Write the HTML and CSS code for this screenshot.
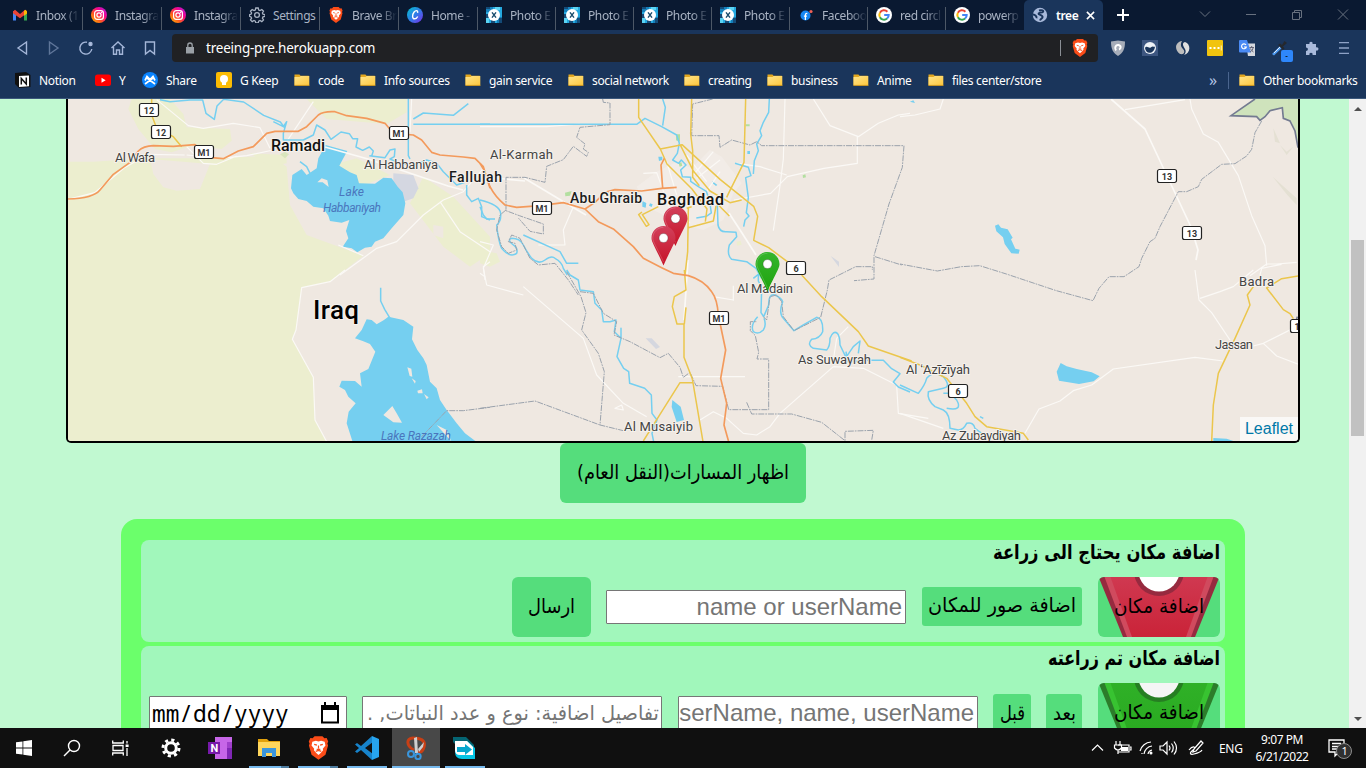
FILE: index.html
```html
<!DOCTYPE html>
<html lang="ar">
<head>
<meta charset="utf-8">
<title>treeing</title>
<link rel="stylesheet" href="styles.css">
</head>
<body>
<svg class="defs" width="0" height="0">
  <defs>
    <linearGradient id="gold" x1="0" y1="0" x2="1" y2="1"><stop offset="0" stop-color="#ffe48a"/><stop offset="1" stop-color="#fdc73e"/></linearGradient>
    <linearGradient id="insta" x1="0" y1="1" x2="1" y2="0"><stop offset="0" stop-color="#ffc400"/><stop offset=".35" stop-color="#ff5a1f"/><stop offset=".65" stop-color="#f4068c"/><stop offset="1" stop-color="#a31cf0"/></linearGradient>
    <linearGradient id="canva" x1="0" y1="0" x2="1" y2="1"><stop offset="0" stop-color="#00c4cc"/><stop offset=".5" stop-color="#2f7de8"/><stop offset="1" stop-color="#7d2ae8"/></linearGradient>
    <linearGradient id="redpin" x1="0" y1="0" x2="0" y2="1"><stop offset="0" stop-color="#d2405b"/><stop offset="1" stop-color="#c61226"/></linearGradient>
    <linearGradient id="greenpin" x1="0" y1="0" x2="0" y2="1"><stop offset="0" stop-color="#36b52d"/><stop offset="1" stop-color="#1ea30d"/></linearGradient>
    <linearGradient id="redface" x1="0" y1="0" x2="0" y2="1"><stop offset="0" stop-color="#d03a52"/><stop offset="1" stop-color="#ca2338"/></linearGradient>
    <linearGradient id="greenface" x1="0" y1="0" x2="0" y2="1"><stop offset="0" stop-color="#30b128"/><stop offset="1" stop-color="#28a91f"/></linearGradient>
    <symbol id="folder" viewBox="0 0 16 16"><path d="M.5 2.500h5l1 1.300h8.300v9.700H.5z" fill="#e3a71e"/><path d="M.5 5h5l1.200-1h8.600v9.200H.5z" fill="url(#gold)"/><path d="M.5 13.400h15" stroke="#d99d1c" stroke-width=".8"/></symbol>
    <symbol id="ig" viewBox="0 0 16 16"><circle cx="8" cy="8" r="8" fill="url(#insta)"/><g fill="none" stroke="#fff" stroke-width="1.200"><rect x="3.600" y="3.600" width="8.800" height="8.800" rx="2.600"/><circle cx="8" cy="8" r="2.100"/></g><circle cx="10.600" cy="5.400" r=".6" fill="#fff"/></symbol>
    <symbol id="brave" viewBox="0 0 16 18"><path d="M5 0h6l1.500 1.600 1.700-.2L15.400 4l-.6 1.600.5 1.500-2 7L8 18l-5.300-3.900-2-7 .5-1.500L.6 4l1.200-2.600 1.700.2z" fill="#fb4c18"/><path d="M3.300 4.300 6 3.500l2 .5 2-.5 2.700.8.6 2.700-2 2.600.2 1.200-1.800 2L8 14.300l-1.700-1.500-1.800-2 .2-1.200-2-2.600z" fill="#fff"/><path d="M4.700 6.200l2.100.6M11.300 6.200l-2.100.6M8 7v2.300M6.600 10h2.800M5.900 11.600l2.100-.8 2.100.8" stroke="#fb4c18" stroke-width=".9" fill="none"/></symbol>
    <symbol id="google" viewBox="0 0 16 16"><circle cx="8" cy="8" r="8" fill="#fff"/><g fill="none" stroke-width="2"><path d="M11.400 4.700A4.700 4.700 0 0 0 3.900 5.800" stroke="#ea4335"/><path d="M3.900 5.800a4.700 4.700 0 0 0 0 4.400" stroke="#fbbc05"/><path d="M3.900 10.200a4.700 4.700 0 0 0 7.200 1.400" stroke="#34a853"/><path d="M11.100 11.600A4.700 4.700 0 0 0 12.700 8H8.200" stroke="#4285f4"/></g></symbol>
    <symbol id="pixlr" viewBox="0 0 16 16"><path fill="#25a9e0" d="M0 0h16v16H0z"/><path d="M0 0h7v5H0zM11 10h5v6h-5z" fill="#1580bb"/><path d="M0 0h4v2H0zM13 11h3v5h-3zM0 7h3v4H0zM5 13h4v3H5z" fill="#144b78"/><path d="M9 0h5v3H9zM0 11h3v5H0z" fill="#5bd4f4"/><circle cx="8" cy="8" r="6" fill="#fff"/><path d="M6 5.300 10 10.700M10 5.300 6 10.700" stroke="#174a6b" stroke-width="1.400"/></symbol>
    <symbol id="gear" viewBox="0 0 16 16"><g fill="none" stroke="currentColor"><circle cx="8" cy="8" r="2.400" stroke-width="1.300"/><path stroke-width="1.300" d="M6.800 1h2.400l.5 2 1.300.6 1.800-1.100 1.700 1.700-1.100 1.800.6 1.200 2 .5v1.600l-2 .6-.6 1.300 1.100 1.700-1.700 1.700-1.800-1.100-1.300.6-.5 1.900H6.800l-.5-1.900-1.300-.6-1.800 1.100-1.700-1.700 1.100-1.700-.6-1.300-1.500-.6V7.700l1.500-.5L2.600 6 1.500 4.200l1.700-1.700L5 3.600 6.300 3z"/></g></symbol>
    <symbol id="pin" viewBox="0 0 25 41"><path d="M12.500.5C5.900.5.5 5.900.5 12.500c0 4.500 4.500 10.500 12 27.500 7.500-17 12-23 12-27.500C24.500 5.900 19.100.5 12.500.5z"/><path d="M12.500 1.800C6.600 1.800 1.800 6.600 1.800 12.500c0 3.900 4 9.400 10.700 24" fill="none" stroke="#fff" stroke-opacity=".18"/><circle cx="12.500" cy="12.500" r="4.500" fill="#fff" stroke="#333" stroke-opacity=".3"/></symbol>
  </defs>
</svg>

<div class="screen">
  <header class="browser">
    <div class="tabs">
      <div class="tab first"><svg class="fav" viewBox="0 0 16 16"><path d="M1 13.500V4h3v9.500z" fill="#4285f4"/><path d="M12 13.500V4h3v9.500z" fill="#34a853"/><path d="M1 4.500 3 2.800 8 7l5-4.200 2 1.700v1.700L8 11.200 1 6.200z" fill="#ea4335"/><path d="M12 4l1.500-1.300L15 4.200v2.300l-3 2.200z" fill="#fbbc04"/></svg><span>Inbox (1</span></div>
      <div class="tab"><svg class="fav"><use href="#ig"/></svg><span>Instagra</span></div>
      <div class="tab"><svg class="fav"><use href="#ig"/></svg><span>Instagra</span></div>
      <div class="tab"><svg class="fav"><use href="#gear"/></svg><span class="full">Settings</span></div>
      <div class="tab"><svg class="fav"><use href="#brave"/></svg><span>Brave Br</span></div>
      <div class="tab"><svg class="fav" viewBox="0 0 16 16"><circle cx="8" cy="8" r="8" fill="url(#canva)"/><path d="M10.600 5.800c.4-3-2-2.600-3.500-.8-2.200 2.800-2 7 .6 6.800 1.200 0 2.300-.9 3-2.300" fill="none" stroke="#fff" stroke-width="1.400"/></svg><span>Home -</span></div>
      <div class="tab n"><svg class="fav"><use href="#pixlr"/></svg><span>Photo E</span></div>
      <div class="tab n"><svg class="fav"><use href="#pixlr"/></svg><span>Photo E</span></div>
      <div class="tab n"><svg class="fav"><use href="#pixlr"/></svg><span>Photo E</span></div>
      <div class="tab n"><svg class="fav"><use href="#pixlr"/></svg><span>Photo E</span></div>
      <div class="tab n"><svg class="fav" viewBox="0 0 16 16"><circle cx="7.500" cy="8.500" r="5" fill="#1686f2"/><path d="M7.400 13V8.200c0-1.300.6-1.900 1.900-1.700M5.900 9.200h3" stroke="#fff" stroke-width="1.300" fill="none"/><circle cx="13" cy="4.500" r="1.600" fill="#f06057"/></svg><span>Faceboo</span></div>
      <div class="tab n"><svg class="fav"><use href="#google"/></svg><span>red circl</span></div>
      <div class="tab n"><svg class="fav"><use href="#google"/></svg><span>powerp</span></div>
      <div class="tab active"><svg class="fav" viewBox="0 0 16 16"><circle cx="8" cy="8" r="7.200" fill="#a9badb"/><path d="M7 3.500c3-.8 5 .2 4 1.500S7 5 6.500 6.500s5 1.500 4 4c-.6 1.300-2 1.500-2.500 3M1 7.500c2 .3 4 1.700 3.500 3.700" stroke="#1a355b" stroke-width="1.900" fill="none"/></svg><span>tree</span><svg class="close" viewBox="0 0 10 10"><path d="M1 1l8 8M9 1 1 9" stroke="#fff" stroke-width="1.700"/></svg></div>
      <svg class="plus" viewBox="0 0 12 12"><path d="M6 0v12M0 6h12" stroke="#fff" stroke-width="2"/></svg>
      <svg class="win" viewBox="0 0 144 12"><g fill="none" stroke="#68717f"><path d="M1 4.500l5 5 5-5M47 7.500h10M93.500 5.500h7v7h-7zM95.500 5.500v-2h7v7h-2M139 2.500l10 10M149 2.500l-10 10" transform="translate(0 -1)"/></g></svg>
    </div>
    <div class="toolbar">
      <div class="nav">
        <svg viewBox="0 0 16 16"><path d="M12.500 2v12L4 8z"/></svg>
        <svg class="dim" viewBox="0 0 16 16"><path d="M3.500 2v12L12 8z"/></svg>
        <svg viewBox="0 0 16 16"><path d="M9 2.200A6 6 0 1 0 13.800 9"/><circle cx="12.500" cy="4" r="1.500" fill="#b3c4e4"/></svg>
        <svg viewBox="0 0 16 16"><path d="M1.500 8 8 2l6.500 6M3.500 7v7.200h3V10h3v4.200h3V7"/></svg>
        <svg viewBox="0 0 16 16"><path d="M3.500 2h9v12L8 10.500 3.500 14z"/></svg>
      </div>
      <div class="url">
        <svg class="lock" viewBox="0 0 10 12"><path d="M1 5h8v6.500H1z" fill="#9aa0a6"/><path d="M2.800 5V3.200a2.200 2.200 0 0 1 4.400 0V5" fill="none" stroke="#9aa0a6" stroke-width="1.300"/></svg>
        <span>treeing-pre.herokuapp.com</span><i></i><svg class="lion"><use href="#brave"/></svg>
      </div>
      <div class="ext">
        <svg viewBox="0 0 16 16"><path d="M1 1.500 8 .5l7 1C15 9 13 13 8 16 3 13 1 9 1 1.500z" fill="#a6adb9"/><path d="M6 10.500C4 7.500 6 4.500 8.500 5c3 .7 2.500 4 .5 4.500" fill="none" stroke="#fff" stroke-width="2"/></svg>
        <svg viewBox="0 0 16 16"><path fill="#3d5680" d="M0 0h16v16H0z"/><circle cx="8" cy="8" r="6" fill="#eef2f7"/><path d="M3 8c2-3 4 1 6-.8 2-1.600 3 0 4-.5-.5 4-3 6-5.500 6S3.500 11 3 8z" fill="#1a355b"/></svg>
        <svg viewBox="0 0 16 16"><path d="M7 1c-7 1-8 9-2 13 5 1 5-3 3-5S5 5 7 1z" fill="#bdbdbd"/><path d="M10 2c-4 1-1 5 0 7s1 4-1 6c7-2 7-11 1-13z" fill="#e0e0e0"/></svg>
        <svg viewBox="0 0 16 16"><rect width="16" height="16" rx="1" fill="#f1c40f"/><path d="M2.500 7h2v2h-2zM6.500 7h2v2h-2zM10.500 7h2v2h-2zM13.800 5.500h.8v5h-.8z" fill="#fff"/></svg>
        <svg viewBox="0 0 16 16"><path fill="#d6d9df" d="M7 3.500h9V16H9z"/><path d="M0 1q0-1 1-1h7l4 12.500H1q-1 0-1-1z" fill="#4a8af4"/><path d="M7 5A2.400 2.400 0 1 0 7.300 7H5" stroke="#fff" fill="none" stroke-width="1.200"/><path d="M10.500 7.500h4.500M12.700 6v1.500M11 12c2-1 3-2.500 3-4.500M11.500 8.500c.5 1.500 2 3 3 3.500" stroke="#667" fill="none"/></svg>
        <svg class="dropper" viewBox="0 0 22 22"><path d="M1 14 10 5l2 2-9 8.500z" fill="#4f9cf3"/><path d="M3 13 9.500 6.500" stroke="#dfe9f6"/><path d="M9 3.500 11 5l2.500-4 2.500 2-4 3.500 1.500 2-1.500 1.500-5-5z" fill="#25282d"/><rect x="10" y="10" width="12" height="12" rx="2" fill="#2e87fb"/><path d="M14.500 16.500h2" stroke="#123"/></svg>
        <svg viewBox="0 0 16 16"><path d="M2 4h3.500C4.500 1 9.500 1 8.500 4H12v3.500c3.300-1 3.300 4 0 3V15H8.500c1-3-4-3-3 0H2v-4c2.500 0 2.500-3.500 0-3.500z" fill="#a9badb"/></svg>
        <svg viewBox="0 0 16 16"><path d="M3 2.700h10M3 8h10M3 13.300h10" stroke="#8ea2c6" stroke-width="1.300"/></svg>
      </div>
    </div>
    <nav class="marks">
      <a><svg viewBox="0 0 16 16"><path d="M0 1 11 0l4.500 3v12L4 16l-4-4z" fill="#111"/><path d="M4 4l10-.6v10.800L4 15z" fill="#fff"/><path d="M6.300 12.500V6.500l5 5.500V5.500" fill="none" stroke="#111" stroke-width="1.500"/></svg>Notion</a>
      <a><svg viewBox="0 0 16 16"><rect y="2.500" width="16" height="11.500" rx="2.500" fill="#f00"/><path d="M6.500 5.800v5l4.200-2.500z" fill="#fff"/></svg>Y</a>
      <a><svg viewBox="0 0 16 16"><circle cx="8" cy="8" r="8" fill="#0a84ff"/><path d="M3 12 11 6M13 12 5 6M3 8.500 5 4.500l3 3 3-3 2 4" stroke="#fff" stroke-width="1.700" fill="none"/></svg>Share</a>
      <a><svg viewBox="0 0 16 16"><rect width="16" height="16" rx="2" fill="#fbbc04"/><circle cx="8" cy="7" r="4" fill="#fff"/><path d="M6 10h4v3H6z" fill="#fff"/></svg>G Keep</a>
      <a><svg><use href="#folder"/></svg>code</a>
      <a><svg><use href="#folder"/></svg>Info sources</a>
      <a><svg><use href="#folder"/></svg>gain service</a>
      <a><svg><use href="#folder"/></svg>social network</a>
      <a><svg><use href="#folder"/></svg>creating</a>
      <a><svg><use href="#folder"/></svg>business</a>
      <a><svg><use href="#folder"/></svg>Anime</a>
      <a><svg><use href="#folder"/></svg>files center/store</a>
      <b>»</b>
      <a class="other"><svg><use href="#folder"/></svg>Other bookmarks</a>
    </nav>
  </header>

  <div class="viewport">
    <main class="page">
      <div class="map">
        <svg viewBox="68 99 1230 342" width="1230" height="342">
          <!-- land cover -->
          <g transform="translate(60 95) scale(.33333)">
            <path class="desert" d="M24 200 100 200 180 195 270 190 420 190 570 185 640 185 680 215 690 330 740 420 910 482 855 525 810 560 725 578 708 705 697 733 760 847 765 975 800 1040H24z"/>
            <path class="desert" d="M215 12h115l40 45 10 40 130 5 5 35-30 25-90-10-60 20-50-10-50-60-30-60zM740 12h300v40l-60 35-180-15zM570 175l110 5v25l-50 10zM835 205 890 190 990 240 900 275 850 240zM1090 245l90 60 110 120v50l-60 40-80-60-100-130z"/>
            <path class="land" d="M270 192l180 15-30 75-70 5-40-10-30-40zM1120 390l30 5v35l-30-10z"/>
            <path d="M1000 235l60 5 15 40-15 30-30 10-30-45z" fill="#d4d7e1"/>
            <path d="M660 178l15-8 12 8-12 12z" fill="#d9e5bd"/>
            <path class="lake" d="M797 150 862 168 850 190 838 212 870 232 890 240 897 265 945 266 970 248 995 250 1013 275 1028 292 1036 325 1030 360 995 400 970 430 945 440 935 455 915 458 892 472 875 460 848 455 865 430 858 408 868 375 845 383 810 378 805 362 790 340 760 335 740 318 715 312 700 295 693 280 697 240 725 222 740 240 770 220 775 190z"/>
            <path d="M772 262 785 250 802 256 806 276 788 262z" class="land"/>
          </g>
          <g transform="translate(60 270) scale(.33333)">
            <path class="lake" d="M885 205 905 180 920 148 935 150 950 163 972 150 985 140 1030 150 1060 170 1056 208 1072 240 1090 265 1100 285 1110 335 1130 355 1140 390 1160 420 1190 460 1215 490 1250 516H878L860 460 866 425 887 400 865 380 855 360 838 350 845 332 885 333 905 350 900 310 925 297 946 245 930 222 910 214z"/>
            <path class="land" d="M970 435 997 408 1010 430 1026 458 1000 457zM1042 292l12 4 3 24-8-2zM1055 325l12 8-2 8zM1072 362l14-4 2 12-14 0zM1092 372l14 10-6 6zM1130 465l30 15 14 34-20-22z"/>
            <path class="river" d="M962 53v40l12 25 18 30"/>
          </g>
          <g transform="translate(480 95) scale(.33333)">
            <path class="desert" d="M0 465l50 10 10 25-30 15-30-10zM770 440l12-3 3 12-14 3z"/>
            <path class="urban" d="M530 230l60-30 45 20 55-55 35 20 60 80-25 30-30 80-60 30-70-20-100-50-30-60z"/>
            <path class="park" d="M588 118l12 0v22l-12-4zM596 205l8-3 3 10-8 3zM255 293l20-5-5 14-14 2zM968 241l8-3 2 9-9 2zM797 88l12 0v6h-12z"/>
            <path class="lake" d="M535 185l12 0v10l-10 3zM802 168h8v9h-8zM487 318l12 6-2 14-10-3zM510 325l8 3-3 8-8-4zM697 258l15 12-4 3-10-8z"/>
            <path d="M1052 483l25 17v16zM497 730l18 0 25 26-12 6z" fill="#d5d7df"/>
            <path class="lake" d="M577 915l25 20 10 40-22 6-15-45z"/>
          </g>
          <g transform="translate(900 95) scale(.33333)">
            <path d="M1065 12 995 62 1070 66 1080 76 1110 47 1147 38 1150 70 1175 80 1185 110 1194 155V12z" fill="#cfe3bc"/>
            <path d="M1118 245l72 65v20l-28-30zM1140 150l20 20 20-15-20 25zM1120 100l5 40 15 5z" fill="#e4e0d3"/>
            <path class="lake" d="M285 392l10-4 8 10 20 5 15 25-5 5 13 28 13 3-3 12-22-1-20-28-5-20-20-18z"/>
            <path class="lake" d="M470 830l12-26 18 10 30 8 45 10 24 12-18 15-44 8-60-10z"/>
            <path class="lake" d="M940 1029l40 2 20 7h-60zM30 20l10-4 5 8z"/>
          </g>
          <!-- minor roads -->
          <g class="minor">
            <path transform="translate(60 95) scale(.33333)" d="M290 14 385 92 430 100 520 85 600 98 630 160M380 180 480 190 560 182 640 165M380 155l50 50 40 3 60-25M24 313l80-20 90-75 70-40 110 2M680 140l80-120M835 450l75 32M840 540l110-80 60-20 80-80 60-45 60-25 60-70M1140 320l60 90 90 60M1055 12l-5 100M1290 500l-20 15 5 40"/>
            <path transform="translate(60 270) scale(.33333)" d="M855 0 810 35 725 53 708 180 697 208 760 322 765 450 800 515"/>
            <path transform="translate(480 95) scale(.33333)" d="M0 95h200L300 87M915 12l-5 180-10 80-20 135M1000 12l50 80 85 33 60-40 60-25 35-5M1132 125v80l-100 15-110 25-50 50-110 20M770 205l70 10 80 25M280 335l-30 70 5 45-80 0M0 440l40 10-30 70 10 50 110 30M490 235l40-2 40 110 60 40M560 200l30 100M620 180l60 80M640 240l60-70M650 250l70-55M720 230l-40 60"/>
            <path transform="translate(480 270) scale(.33333)" d="M130 50 310 205 350 315 430 400 500 440M0 10l15 10M760 92v-45M700 80l60 10M1060 290 900 430 870 470 830 495 790 490 740 445 700 425 660 450M1060 290l90 5 100 50 5 85 90 15M1105 170l-35 35-10 65M595 320h200M405 415l20-10 5 15z"/>
            <path transform="translate(900 95) scale(.33333)" d="M0 65l45-5 75-18 10-30M675 44l180-30M870 12l5 30 35 75 45 25 60 100 40 120 40 90 5 60M1190 502l-60 5-30 0-50 35M1080 540l5-20 60-12M0 955l130 45"/>
            <path transform="translate(900 270) scale(.33333)" d="M375 490 417 417 480 393 520 362 575 345 640 297 885 262 970 273M1060 228l30-8 90-45M1090 220l40 38 65 25M885 0l12 90 38 38 55 82M900 85l60-20 40-15 60-50"/>
          </g>
          <g class="wide">
            <path d="M524 178l50 30 12 7M729 213 742 233 756 255M1111 99l34 30 46 98 7 23-2 10M688 260l-4 60"/>
            <path d="M325 147l43 12 80 27 15 4M485 177l40 4"/>
          </g>
          <!-- rivers and canals -->
          <g class="river">
            <path transform="translate(60 95) scale(.33333)" d="M300 14l30 6 60-5 38 0 10 40 25 18 8-40 20-20 60 8 60 40 50 20 15 20M640 80l30 15 10-15-10 35 0 20 60 0 30-15 10-30 25 15 18 28 30-22 25 5 10 15 15 0-5 25 20 10 20-10 12 12-5 15"/>
            <path transform="translate(60 95) scale(.33333)" d="M928 182 975 188 990 165 1005 162 1003 185 990 192 1020 205 1060 210 1100 195 1130 205 1150 230 1175 255 1190 270 1215 262M1045 12v170l5 10M1060 72l30-18 90 7 45-35M1060 88h230M720 200l20 15 15 30M1220 270v30l15 20 20-10 10 25 0 30 25 10"/>
            <path transform="translate(480 95) scale(.33333)" d="M0 88h470l25-18 50 25 45 25 8 25-6 30-14 20 18 10 8-10 14 15-16 15 5 20 25 2 0 12 22 15 25 15 10 30 5 35-15 10-30 5M548 12l8 25-8 55M130 420l110 50 20 35 35 0M765 205l40 12 8 25-16 6 8 60-6 45 8 10-12 12-4 20M868 12l-2 40-16 30-10 25 5 15-15 25 5 20-12 30-3 40"/>
            <path transform="translate(480 95) scale(.33333)" d="M0 315Q60 330 62 355T50 390Q55 440 65 460 90 490 110 475 115 460 100 450 80 435 95 430 120 430 130 450T155 490Q175 510 195 495T225 490Q245 500 250 520L262 540M0 335l10 25 10 12 25 0M712 330 714 390Q718 412 740 410L768 412 770 425 748 450Q740 480 755 493L800 500 828 520 845 550"/>
            <path transform="translate(480 270) scale(.33333)" d="M260 0l10 15 25 15 5 30 40 5 5 35 20 20 5 35 20 0 18-5-5 35 20 20V175v30l-12 55 20 35 15 10 3 35 45 15 20 20 2 55 15 20-15 40 5 25M820 25l15-12v20l10 20-2 75 8 12 15-35Q865 70 885 75 905 85 908 95 895 130 910 145L942 182 970 165 1010 142Q1030 145 1028 185 1020 205 995 208 980 225 1000 235L1040 240Q1050 230 1050 205 1060 180 1072 190 1080 200 1080 225L1098 262 1120 230 1140 213 1135 250M833 140Q810 165 820 185 835 195 850 180 860 165 852 145M1098 245l5 30 67-4 40 0 25 25 25 15-20 25 15 15 35 15"/>
            <path transform="translate(900 270) scale(.33333)" d="M0 345 55 370Q75 345 80 325 100 300 130 320 155 350 130 355L85 365Q80 390 105 410L130 420Q150 430 150 475L175 480Q190 480 200 460 220 455 225 475L245 490M140 415Q190 425 170 390L150 370M240 440l10 5M130 370l20 0"/>
          </g>
          <!-- provincial borders -->
          <g class="border">
            <path transform="translate(480 95) scale(.33333)" d="M368 12l2 10 20 2v65l-90 8-10 30 25 20-5 15 15 10-5 12-40-30-30 40-50 20-5 48-60-15H78v100l40 15 72 25v30l-40-8-35-40M698 12l-60 15-3 95h82l3 35 35-22 55 15 20-10 15 12h427l-5 65-40 110-45 155v70l-60 5"/>
            <path transform="translate(480 95) scale(.33333)" d="M78 345 60 360l-10 45 15 50 20 20 25-10-5-20-20-5 10-20 25 10 30 60 25 20 50-5 40 50 30 45M1185 485l80 25"/>
            <path transform="translate(480 270) scale(.33333)" d="M260 5 303 80 318 128 305 180 355 250 373 305 360 465 430 482M0 415l165-22 195 72M300 65l40 5 30 60 40 25-8 40 48 20 90 48 25-13 35 42 10 30 20-15 18 40 80 2 18 70h120V267h-35l5-20-10-50-15-15V155h20M850 140l10 10 10-70 20-5 15 20 5 45 32 42 30-15 50-25 20-82 5-30 80-40h50V0M800 397l15 35h120l90 25 70 55v-28l85-3-5 30"/>
            <path transform="translate(60 270) scale(.33333)" d="M1085 500l75-78 50 0 80-10"/>
            <path transform="translate(900 95) scale(.33333)" d="M1085 78l-20 35-10 50-15 20-35 23-40 2-60 45-10 22-35 15h-25l-55 105-15 35-15 10-25 50-8 25-45 30-45 0-30 35-18 37-110-30-150-50-80-25-55 3-72 13L0 507"/>
          </g>
          <path transform="translate(900 95) scale(.33333)" class="nation" d="M1065 12 993 62 1070 65 1080 76 1095 65 1110 47 1147 38 1150 70 1170 78 1185 108 1194 158M1192 665l-6 20"/>
          <!-- primary roads and motorways -->
          <g class="primary">
            <path transform="translate(60 95) scale(.33333)" d="M275 12 275 60 290 100 340 125 365 155"/>
            <path transform="translate(480 95) scale(.33333)" d="M476 12v55l65 95 20 45 75 75 45 60-5 38M541 162l65-13 115 105 100 80 12 30-12 72 45 22 60 45M635 12l-3 105 6 50v80l20 25M600 148l40 80 50 60 60 35 35-8M797 12l-5 190-45 90-7 15M710 325l38 38M625 398l75-20 8-45M625 340l-2 130-8 70M535 335l-48 24 20 30-8 5-23-35 10-8M620 340l15-5"/>
            <path transform="translate(480 270) scale(.33333)" d="M613 0l5 60-35 20-6 30 14 52h22l5-50M612 162l0 100 25 65 32 188M638 338h-38l-60 95-50 80M965 15l60 65 110 105 30 43 130 45"/>
            <path transform="translate(900 270) scale(.33333)" d="M0 262l60 23 80 40 60 75 25 40 35 30 110 20 15 20M1060 50l-18 25 8 30-45 100-50 105-15 95-5 110M1195 18l-50 8-45 28 50 65 20 12 10 15"/>
          </g>
          <g class="motorway">
            <path transform="translate(60 95) scale(.33333)" d="M24 312Q100 310 120 285L160 238 210 202 235 168Q250 153 280 152L340 154 405 149 455 188 490 191 535 168 580 155 620 115 645 109H715L740 95 775 60Q790 48 825 50L860 62 920 70 975 85 1000 115 1060 120 1085 135 1115 172 1140 180 1210 186 1245 190 1270 215 1290 280"/>
            <path transform="translate(480 95) scale(.33333)" d="M0 205 12 225 30 275Q45 305 75 330L110 337 180 332 250 323 315 342 355 380 400 402 460 455 490 490 545 518 580 535 625 542Q670 555 695 590 712 612 715 660L718 675 737 765 722 850 740 925 732 990 746 1040M315 342l30-20 30-30 30-8 80 4 60-8 45-3M553 190l-10 20 5 70"/>
          </g>
          <!-- road shields -->
          <g class="shields">
            <g transform="translate(149 110)"><rect x="-9.500" y="-6.500" width="19" height="13" rx="2"/><text y="3.500">12</text></g>
            <g transform="translate(161 132)"><rect x="-9.500" y="-6.500" width="19" height="13" rx="2"/><text y="3.500">12</text></g>
            <g transform="translate(204 152)"><rect x="-9.500" y="-6.500" width="19" height="13" rx="2"/><text y="3.500">M1</text></g>
            <g transform="translate(399 133)"><rect x="-9.500" y="-6.500" width="19" height="13" rx="2"/><text y="3.500">M1</text></g>
            <g transform="translate(542 208)"><rect x="-9.500" y="-6.500" width="19" height="13" rx="2"/><text y="3.500">M1</text></g>
            <g transform="translate(719 318)"><rect x="-9.500" y="-6.500" width="19" height="13" rx="2"/><text y="3.500">M1</text></g>
            <g transform="translate(796 268)"><rect x="-9.500" y="-6.500" width="19" height="13" rx="2"/><text y="3.500">6</text></g>
            <g transform="translate(958 391)"><rect x="-9.500" y="-6.500" width="19" height="13" rx="2"/><text y="3.500">6</text></g>
            <g transform="translate(1167 176)"><rect x="-9.500" y="-6.500" width="19" height="13" rx="2"/><text y="3.500">13</text></g>
            <g transform="translate(1192 233)"><rect x="-9.500" y="-6.500" width="19" height="13" rx="2"/><text y="3.500">13</text></g>
            <g transform="translate(1300 326)"><rect x="-9.500" y="-6.500" width="19" height="13" rx="2"/><text x="-3" y="3.500">1</text></g>
          </g>
          <!-- place names -->
          <g class="places">
            <text x="115" y="162" textLength="40">Al Wafa</text>
            <text x="364" y="169" textLength="74">Al Habbaniya</text>
            <text x="490" y="159" textLength="63">Al-Karmah</text>
            <text x="737" y="293" textLength="56">Al Madain</text>
            <text x="798" y="364" textLength="73">As Suwayrah</text>
            <text x="906" y="374" textLength="64">Al ʻAzīzīyah</text>
            <text x="942" y="440" textLength="79">Az Zubaydiyah</text>
            <text x="624" y="431" textLength="69">Al Musaiyib</text>
            <text x="1239" y="286" textLength="35">Badra</text>
            <text x="1215" y="349" textLength="38">Jassan</text>
            <text class="city" x="271" y="151" textLength="54">Ramadi</text>
            <text class="town" x="449" y="182" textLength="53">Fallujah</text>
            <text class="town" x="570" y="203" textLength="72">Abu Ghraib</text>
            <text class="city" x="657" y="205" textLength="67">Baghdad</text>
            <text class="country" x="313" y="319" textLength="46">Iraq</text>
            <text class="water" x="339" y="196" textLength="25">Lake</text>
            <text class="water" x="323" y="212" textLength="58">Habbaniyah</text>
            <text class="water" x="381" y="440" textLength="70">Lake Razazah</text>
          </g>
          <use href="#pin" x="663" y="206" width="25" height="41" fill="url(#redpin)"/>
          <use href="#pin" x="651" y="225.500" width="25" height="41" fill="url(#redpin)"/>
          <use href="#pin" x="755" y="251.500" width="25" height="41" fill="url(#greenpin)"/>
        </svg>
        <a class="leaflet">Leaflet</a>
      </div>

      <button class="btn routes" dir="rtl"><svg viewBox="0 0 214 40"><text x="213" y="28" textLength="212" lengthAdjust="spacingAndGlyphs">اظهار المسارات(النقل العام)</text></svg></button>

      <section class="panel" dir="rtl">
        <form class="card">
          <h2><svg viewBox="0 0 228 28" width="228" height="28"><text x="228" y="19" textLength="227" lengthAdjust="spacingAndGlyphs">اضافة مكان يحتاج الى زراعة</text></svg></h2>
          <div class="row">
            <button type="button" class="btn place"><svg viewBox="0 0 122 60"><path d="M-1-4 25 60H97L123-4z" fill="#962a3f"/><path d="M5-4 29 60H93L117-4z" fill="#d04a5e"/><path d="M11-4 34 60H88L111-4z" fill="url(#redface)"/><circle cx="61" cy="-6" r="25" fill="#962a3f"/><circle cx="61" cy="-6" r="20.500" fill="#fff"/><text x="106" y="36" textLength="90" lengthAdjust="spacingAndGlyphs">اضافة مكان</text></svg></button>
            <button type="button" class="btn small photos"><svg viewBox="0 0 160 39"><text x="154" y="25" textLength="148" lengthAdjust="spacingAndGlyphs">اضافة صور للمكان</text></svg></button>
            <input class="field" placeholder="name or userName">
            <button type="button" class="btn send"><svg viewBox="0 0 79 60"><text x="63" y="36" textLength="47" lengthAdjust="spacingAndGlyphs">ارسال</text></svg></button>
          </div>
        </form>
        <form class="card">
          <h2><svg viewBox="0 0 228 28" width="228" height="28"><text x="228" y="19" textLength="172" lengthAdjust="spacingAndGlyphs">اضافة مكان تم زراعته</text></svg></h2>
          <div class="row">
            <button type="button" class="btn place"><svg viewBox="0 0 122 60"><path d="M-1-4 25 60H97L123-4z" fill="#2c7d2a"/><path d="M5-4 29 60H93L117-4z" fill="#38c331"/><path d="M11-4 34 60H88L111-4z" fill="url(#greenface)"/><circle cx="61" cy="-6" r="25" fill="#267e22"/><circle cx="61" cy="-6" r="20.500" fill="#f5f5f5"/><text x="106" y="36" textLength="90" lengthAdjust="spacingAndGlyphs">اضافة مكان</text></svg></button>
            <button type="button" class="btn small after"><svg viewBox="0 0 36 39"><text x="30" y="26" textLength="23" lengthAdjust="spacingAndGlyphs">بعد</text></svg></button>
            <button type="button" class="btn small before"><svg viewBox="0 0 38 39"><text x="32" y="26" textLength="25" lengthAdjust="spacingAndGlyphs">قبل</text></svg></button>
            <div class="field names"><span dir="ltr">userName, name, userName</span></div>
            <div class="field details"><svg viewBox="0 0 296 32"><text x="295" y="23" textLength="292" lengthAdjust="spacingAndGlyphs">تفاصيل اضافية: نوع و عدد النباتات, .</text></svg></div>
            <div class="field date" dir="ltr"><span>mm/dd/yyyy</span><svg viewBox="0 0 18 22"><path d="M1 4h16v16.500H1z" fill="none" stroke="#000" stroke-width="2"/><path d="M0 3h18v5H0zM3 0h2v4H3zM13 0h2v4h-2z"/></svg></div>
          </div>
        </form>
      </section>
    </main>
    <aside class="scroll"><i class="up"></i><div class="thumb"></div><i class="down"></i></aside>
  </div>

  <footer class="taskbar">
    <div class="apps">
      <div><svg width="16" height="16" viewBox="0 0 16 16"><path d="M0 2.300 6.500 1.400v6.100H0zM7.300 1.300 16 0v7.500H7.300zM0 8.400h6.500v6.200L0 13.700zM7.300 8.400H16V16l-8.700-1.200z" fill="#fff"/></svg></div>
      <div><svg width="18" height="18" viewBox="0 0 18 18"><g fill="none" stroke="#fff" stroke-width="1.400"><circle cx="11" cy="7" r="5.500"/><path d="M7 11 1 17"/></g></svg></div>
      <div><svg width="17" height="16" viewBox="0 0 17 16"><path d="M.7.5v2.500h10.600V.5M.7 15.500V13h10.600v2.500M1 5.500h10v5H1zM15 1v2.500M15 8v8" fill="none" stroke="#fff" stroke-width="1.300"/><path d="M13.600 4.500h3v2.500h-3z" fill="#fff"/></svg></div>
      <div class="gap"><svg width="20" height="20" viewBox="0 0 20 20"><circle cx="10" cy="10" r="5.300" fill="none" stroke="#fff" stroke-width="3"/><circle cx="10" cy="10" r="8" fill="none" stroke="#fff" stroke-width="3" stroke-dasharray="3.140"/></svg></div>
      <div class="w"><svg width="24" height="22" viewBox="0 0 24 22"><path fill="#c766e8" d="M7 0h17v22H7z"/><path d="M19 5h5v6h-5z" fill="#a03fcb"/><path d="M19 11h5v11h-5z" fill="#8027b5"/><path fill="#7719aa" d="M0 5h12v12H0z"/><text x="2.500" y="15" fill="#fff" font-size="11" font-weight="700">N</text></svg></div>
      <div class="w on two"><svg width="22" height="20" viewBox="0 0 22 20"><path d="M0 1h9l2 2h11v4H0z" fill="#e2a10c"/><path d="M0 4h22v14H0z" fill="#ffd65c"/><path d="M4 10h14v9h-4v-4H8v4H4z" fill="#3c96dc"/></svg></div>
      <div class="w on two"><svg width="21" height="24"><use href="#brave"/></svg></div>
      <div class="w on"><svg width="24" height="24" viewBox="0 0 24 24"><path d="M17 0 6 10 2 7 0 8.500 4 12 0 15.500 2 17l4-3 11 10 1-6-8-6 8-6z" fill="#1783cb"/><path d="M17 0l7 3v18l-7 3z" fill="#27a4ee"/></svg></div>
      <div class="w on sel"><svg width="20" height="24" viewBox="0 0 20 24"><path d="M8 14C0 10 0 2 7 2s13 2 11 9-6 5-7 4" fill="none" stroke="#c83f15" stroke-width="3"/><path d="M8 2 11 1l1 16H9zM12 13l6-7-1 5-4 5z" fill="#cfcfcf"/><g fill="none" stroke="#3a96dd" stroke-width="2"><circle cx="5" cy="18" r="3"/><circle cx="12" cy="20.500" r="2.700"/></g></svg></div>
      <div class="w on"><svg width="24" height="24" viewBox="0 0 24 24"><path d="M0 1h13l8 8v5H8L0 6z" fill="#056573"/><path d="M2 5h12l8 7v11H9q-7 0-7-7z" fill="#05c4e5"/><path d="M2 5h12l6 6v8H7q-5 0-5-5z" fill="#fff"/><path d="M4 11h8V8l7 5.500-7 5.500v-3H4z" fill="#05a7ce"/></svg></div>
    </div>
    <div class="tray">
      <svg class="icons" width="120" height="20" viewBox="0 0 120 20"><g fill="none" stroke="#fff" stroke-width="1.200"><path d="M2 12.500 7.500 7l5.500 5.500"/><path d="M28 7h11v7H28M40 9h1v3h-1"/><path d="M26 3v4M30 3v4M24.500 7h7v3q-3.500 4-7 0zM28 12v4"/><path d="M52 16V15M50 13a12 12 0 0 1 11-9M54 16a9 9 0 0 1 8-8M58 16a5 5 0 0 1 4-4"/><path d="M70 8v4h3l4 4V4l-4 4zM79 7.500q2 2.500 0 5M81.500 5.500q3.500 4.500 0 9M84 3.500q5 6.500 0 13"/><path d="M104 11 111 3l2 2-7 8-3 1zM99 12c4-5 8-3 4 0s-3 5 1 4 7-2 8-4"/></g><path d="M31 9h7v4h-7z" fill="#fff"/><circle cx="61" cy="15" r="1.500" fill="#fff"/></svg>
      <span class="lang">ENG</span>
      <div class="clock"><span>9:07 PM</span><span>6/21/2022</span></div>
      <svg class="note" width="26" height="22" viewBox="0 0 26 22"><path d="M3 3h15v12h-5l-4 4v-4H3zM6 6.500h9M6 9.500h9M6 12h6" fill="none" stroke="#fff" stroke-width="1.300"/><circle cx="18" cy="14" r="7.500" fill="#303030" stroke="#8d8d8d"/><text x="15.500" y="18" font-size="11" fill="#fff">1</text></svg>
    </div>
  </footer>
</div>
</body>
</html>
```
FILE: styles.css
```css
* { box-sizing: border-box; }
body { margin: 0; font-family: "Noto Sans", "Open Sans", sans-serif; overflow: hidden; }
svg { display: block; flex: none; }
.defs { position: absolute; }
.screen { width: 1366px; height: 768px; display: flex; flex-direction: column; overflow: hidden; }

/* browser chrome */
.browser { height: 99px; background: #1a355b; color: #fff; font-size: 12px; flex: none; border-bottom: 1px solid #3c587c; }
.tabs { height: 30px; display: flex; background: #0a1931; color: #a9b3c3; }
.tab { width: 79px; display: flex; align-items: center; gap: 8px; padding-left: 8px; position: relative; letter-spacing: -.4px; flex: none; }
.tab.first { width: 83px; padding-left: 12px; }
.tab.n { width: 78px; }
.tab::after { content: ""; width: 1px; height: 23px; background: #4d5867; position: absolute; right: 0; top: 7px; }
.tab:has(+ .active)::after, .tab.active::after { display: none; }
.tab span { flex: 1; white-space: nowrap; margin-right: 3px; -webkit-mask: linear-gradient(90deg, #000 60%, transparent); mask: linear-gradient(90deg, #000 60%, transparent); }
.tab span.full { -webkit-mask: none; mask: none; margin-right: 0; }
.tab.active { background: #1a355b; color: #fff; font-weight: 600; border-radius: 5px 5px 0 0; }
.tab.active span { margin: 0; -webkit-mask: none; mask: none; }
.close { width: 9px; height: 9px; margin-right: 8px; }
.fav { width: 16px; height: 16px; }
.plus { width: 12px; height: 12px; margin: 9px 0 0 14px; }
.win { width: 144px; height: 12px; margin: 8px 0 0 70px; overflow: visible; }
.toolbar { height: 36px; display: flex; align-items: center; }
.nav { display: flex; gap: 16px; padding-left: 14px; width: 172px; flex: none; }
.nav svg { width: 16px; height: 16px; fill: none; stroke: #a4b6d8; stroke-width: 1.4; }
.nav .dim { opacity: .5; }
.url { width: 926px; height: 28px; border-radius: 4px; background: #202124; display: flex; align-items: center; padding: 0 10px 0 13px; flex: none; }
.url span { margin-left: 11px; letter-spacing: -.22px; flex: 1; font-size: 13.5px; }
.url i { width: 1px; height: 16px; background: #8b8f95; margin-right: 11px; }
.lock { width: 10px; height: 12px; }
.lion { width: 16px; height: 18px; }
.ext { display: flex; height: 16px; gap: 16.3px; padding-left: 12px; }
.ext svg { width: 16px; height: 16px; }
.ext .dropper { width: 22px; height: 22px; margin-right: -6px; }
.marks { display: grid; grid-template-columns: 80px 47px 74px 78px 66px 105px 103px 116px 83px 86px 75px 281px 30px auto; padding-left: 15px; height: 28px; align-items: center; font-size: 12px; white-space: nowrap; letter-spacing: -.32px; }
.marks a { display: flex; gap: 8px; align-items: center; }
.marks svg { width: 16px; height: 16px; }
.marks b { color: #b3c4e4; font-weight: 400; font-size: 16px; }
.marks .other { border-left: 1px solid #4a658e; padding-left: 10px; margin-left: -11px; }

/* page */
.viewport { height: 629px; display: flex; background: #c1f9d1; flex: none; }
.page { width: 1349px; height: 629px; overflow: hidden; padding-left: 17px; display: flex; flex-direction: column; align-items: center; }
.map { width: 1234px; height: 344px; border: 2px solid #000; border-top: 0; border-radius: 0 0 5px 5px; overflow: hidden; background: #efe8e1; position: relative; flex: none; }
.leaflet { position: absolute; right: 0; bottom: 0; width: 58px; height: 24px; background: rgba(255,255,255,.7); color: #0078a8; font: 16px/23px "Liberation Sans", sans-serif; text-align: center; }
.land { fill: #efe8e1; }
.desert { fill: #eceecf; }
.lake { fill: #75cff0; }
.urban { fill: #f2ece7; }
.park { fill: #b3dfa0; }
.minor, .wide { fill: none; stroke: #fbf9f6; stroke-width: 3.5; stroke-linejoin: round; }
.wide { stroke-width: 1.7; }
.river { fill: none; stroke: #75cff0; stroke-width: 4.5; stroke-linejoin: round; }
.border { fill: none; stroke: #9aa2ac; stroke-width: 3; stroke-dasharray: 18 3 5 3; }
.nation { fill: none; stroke: #747b91; stroke-width: 5; }
.primary { fill: none; stroke: #ebc64c; stroke-width: 4.5; stroke-linejoin: round; }
.motorway { fill: none; stroke: #f39a5c; stroke-width: 5; stroke-linejoin: round; }
.shields rect { fill: #fff; stroke: #222; stroke-width: 1.2; }
.shields text { font: 700 9px Roboto, sans-serif; text-anchor: middle; fill: #333; }
.places { font: 13px Roboto, sans-serif; fill: #444; stroke: #f6f2ed; stroke-width: 2px; paint-order: stroke; stroke-linejoin: round; }
.places .town { font-size: 14px; font-weight: 500; fill: #1c1c1c; }
.places .city { font-size: 16px; font-weight: 500; fill: #111; }
.places .country { font-size: 26px; font-weight: 500; fill: #000; }
.places .water { font-size: 12px; font-style: italic; fill: #4a76bd; stroke: none; }

.btn { border: 0; padding: 0; background: #55dd7c; border-radius: 6px; overflow: hidden; flex: none; display: block; font: 20px "DejaVu Sans", sans-serif; }
.btn svg { width: 100%; height: 100%; direction: rtl; }
.routes { width: 246px; height: 60px; padding: 8px 16px 12px; }
.panel { width: 1124px; height: 260px; margin-top: 16px; padding: 21px 20px 0; border-radius: 16px; background: #6bff6b; flex: none; }
.card { height: 102px; margin-bottom: 4px; padding: 0 5px; border-radius: 8px; background: #a1f7bb; }
h2 { margin: 0; height: 37px; font: 700 20px "DejaVu Sans", sans-serif; }
h2 svg { direction: rtl; }
.row { display: flex; align-items: center; height: 60px; }
.place { width: 122px; height: 60px; }
.send { width: 79px; height: 60px; }
.small { height: 39px; border-radius: 3px; }
.photos { width: 160px; margin-bottom: 1px; }
.after { width: 36px; }
.before { width: 38px; }
.place + *, .photos + *, .names + * { margin-right: 16px; }
.after + *, .before + *, .details + *, input + * { margin-right: 15px; }
.field { width: 300px; height: 34px; border: 1px solid #767676; border-radius: 1px; outline: 0; background: #fff; padding: 0 3px; color: #757575; font: 24px "Liberation Sans", sans-serif; flex: none; overflow: hidden; display: flex; align-items: center; }
.field::placeholder { color: #757575; }
.names { white-space: nowrap; }
.details svg { width: 296px; height: 32px; direction: rtl; fill: #757575; font: 20px "DejaVu Sans", sans-serif; margin: 0 -2px; }
.date { width: 198px; color: #000; font: 22.8px "Noto Sans Mono", "DejaVu Sans Mono", "Liberation Mono", monospace; justify-content: space-between; padding: 0 7px 0 2px; }
.date svg { width: 18px; height: 22px; }

.scroll { width: 17px; background: #f1f1f1; display: flex; flex-direction: column; align-items: center; }
.thumb { width: 13px; height: 196px; margin-top: 129px; background: #c1c1c1; }
.up, .down { border: 4px solid transparent; }
.up { border-bottom-color: #505050; border-top: 0; margin-top: 8px; }
.down { border-top-color: #505050; border-bottom: 0; margin-top: auto; margin-bottom: 7px; }

/* taskbar */
.taskbar { height: 40px; background: #101010; color: #fff; display: flex; justify-content: space-between; font-size: 12px; }
.apps { display: flex; font-family: Roboto, sans-serif; }
.apps div { width: 48px; display: flex; align-items: center; justify-content: center; }
.apps .gap { margin-left: 3px; }
.apps .w { margin-left: 1px; }
.apps .on { background: linear-gradient(#76b9ed, #76b9ed) 50% 100% / 40px 2px no-repeat; }
.apps .two { background: linear-gradient(90deg, #76b9ed 32px, #4e7c9f 32px) 50% 100% / 40px 2px no-repeat; }
.apps .sel { background: linear-gradient(#76b9ed, #76b9ed) 0 100% / 48px 2px no-repeat #484848; }
.tray { display: flex; align-items: center; padding-right: 14px; }
.lang { margin: 0 12px 0 9px; width: 24px; letter-spacing: -.3px; }
.clock { display: flex; flex-direction: column; align-items: center; line-height: 17px; width: 54px; letter-spacing: -.45px; white-space: nowrap; }
.note { margin-left: 17px; }
```
